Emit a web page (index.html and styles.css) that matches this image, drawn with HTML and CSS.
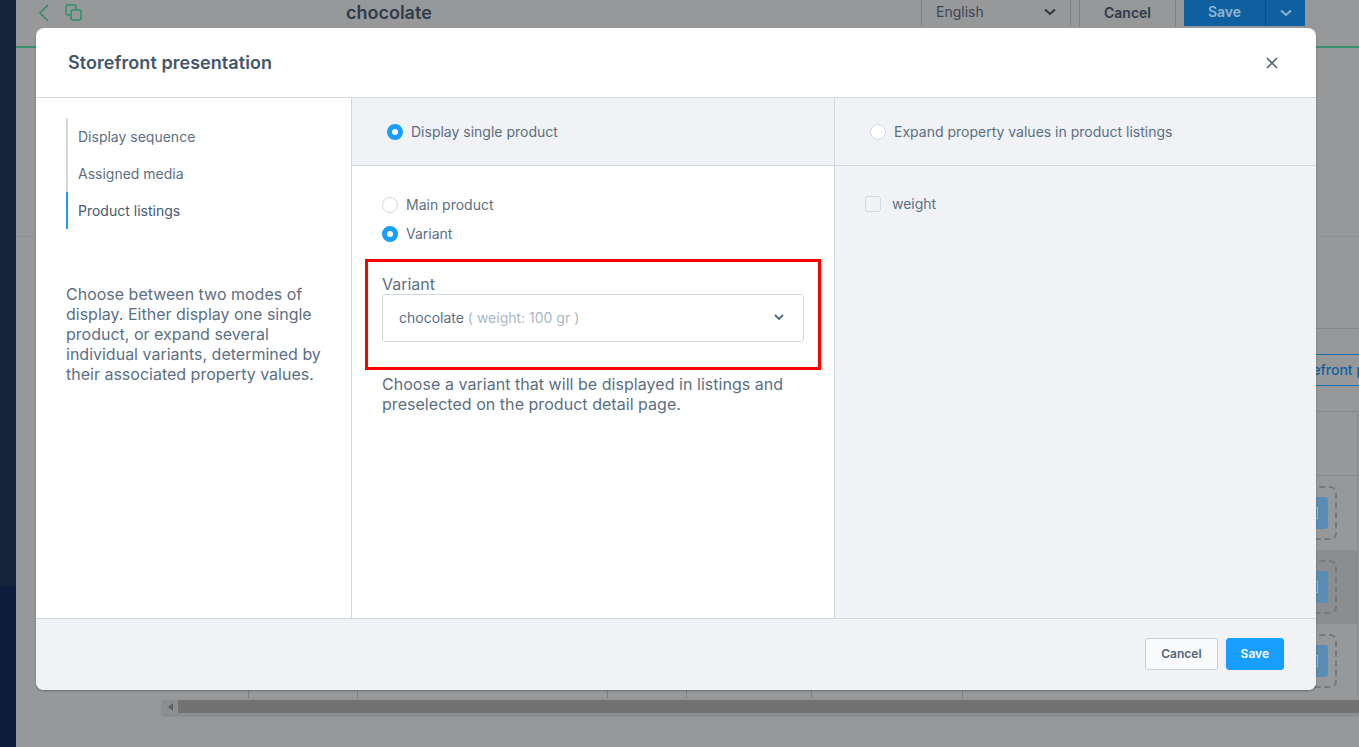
FILE: index.html
```html
<!DOCTYPE html>
<html lang="en">
<head>
  <meta charset="UTF-8" />
  <title>Storefront presentation</title>
  <link rel="stylesheet" href="styles.css">
</head>
<body>
  <div class="page">
    <aside class="rail">
      <div class="rail-bottom"></div>
    </aside>
    <main class="content">
      <header class="topbar">
        <div class="top-icons">
          <svg width="14" height="20" viewBox="0 0 14 20"><path d="M11 2 3 10l8 8" fill="none" stroke="#2f8f6a" stroke-width="1.5"/></svg>
          <svg width="18" height="18" viewBox="0 0 18 18"><g fill="none" stroke="#2f8f6a" stroke-width="1.5"><path d="M5 11H3a2 2 0 0 1-2-2V3a2 2 0 0 1 2-2h6a2 2 0 0 1 2 2v2"/><rect x="6" y="6" width="10" height="10" rx="2"/></g></svg>
        </div>
        <div class="top-title">chocolate</div>
        <div class="top-lang">English
          <svg width="12" height="8" viewBox="0 0 12 8"><path d="M1 1.500 6 6l5-4.500" fill="none" stroke="#2b3440" stroke-width="2"/></svg>
        </div>
        <div class="top-cancel">Cancel</div>
        <div class="top-save">
          <span class="top-save-label">Save</span>
          <span class="top-save-arrow"><svg width="12" height="8" viewBox="0 0 12 8"><path d="M1 1.500 6 6l5-4.500" fill="none" stroke="#8fb4d2" stroke-width="2"/></svg></span>
        </div>
      </header>
      <div class="bg-card"></div>
    </main>
  </div>

  <div class="backdrop-table">
    <div class="bg-tabs">
      <div class="bg-tab">Storefront presentation</div>
    </div>
    <div class="bg-head"></div>
    <div class="bg-row"><span class="drop"><span class="drop-btn"><i></i></span></span></div>
    <div class="bg-row shaded"><span class="drop"><span class="drop-btn"><i></i></span></span></div>
    <div class="bg-row">
      <span class="cell c1"></span>
      <span class="cell c2"></span>
      <span class="cell c3"></span>
      <span class="cell c4"></span>
      <span class="cell c5"></span>
      <span class="cell c6"></span>
      <span class="drop"><span class="drop-btn"><i></i></span></span>
    </div>
    <div class="scrollbar">
      <span class="scroll-arrow"><svg width="5" height="8" viewBox="0 0 5 8"><path d="M5 0v8L0 4z" fill="#5f6062"/></svg></span>
      <span class="scroll-thumb"></span>
    </div>
  </div>

  <section class="modal">
    <header class="modal-header">
      <h1>Storefront presentation</h1>
      <svg width="12" height="12" viewBox="0 0 12 12"><path d="M1 1l10 10M11 1 1 11" fill="none" stroke="#52667a" stroke-width="1.6"/></svg>
    </header>

    <div class="modal-body">
      <div class="modal-side">
        <nav class="side-nav">
          <a href="#">Display sequence</a>
          <a href="#">Assigned media</a>
          <a href="#" class="active">Product listings</a>
        </nav>
        <p class="side-help">Choose between two modes of display. Either display one single product, or expand several individual variants, determined by their associated property values.</p>
      </div>

      <div class="mode mode-single">
        <div class="mode-head">
          <span class="radio checked"></span>
          <span>Display single product</span>
        </div>
        <div class="mode-content">
          <label class="option"><span class="radio"></span>Main product</label>
          <label class="option"><span class="radio checked"></span>Variant</label>
          <div class="highlight">
            <div class="field-label">Variant</div>
            <div class="select">
              <span>chocolate <em>( weight: 100 gr )</em></span>
              <svg width="10" height="7" viewBox="0 0 10 7"><path d="M1 1l4 4 4-4" fill="none" stroke="#52667a" stroke-width="1.8"/></svg>
            </div>
          </div>
          <p class="field-help">Choose a variant that will be displayed in listings and preselected on the product detail page.</p>
        </div>
      </div>

      <div class="mode mode-expand">
        <div class="mode-head">
          <span class="radio"></span>
          <span>Expand property values in product listings</span>
        </div>
        <div class="mode-content">
          <label class="option check-option"><span class="checkbox"></span>weight</label>
        </div>
      </div>
    </div>

    <footer class="modal-footer">
      <button class="btn">Cancel</button>
      <button class="btn primary">Save</button>
    </footer>
  </section>
</body>
</html>
```

FILE: styles.css
```css
* {
  margin: 0;
  padding: 0;
  box-sizing: border-box;
}

html, body {
  height: 100%;
  overflow: hidden;
}

body {
  font-family: Inter, "Noto Sans", sans-serif;
  background: #97989a;
  color: #5b6f83;
  font-size: 14px;
}

.page {
  display: flex;
  height: 100vh;
}

.rail {
  display: flex;
  flex-direction: column;
  justify-content: flex-end;
  width: 16px;
  background: #15233a;
}

.rail-bottom {
  height: 161px;
  background: #0c1e3c;
}

.content {
  flex: 1;
}

.topbar {
  display: flex;
  align-items: stretch;
  height: 48px;
  border-bottom: 2px solid #3a8f6e;
  padding-bottom: 20px;
}

.top-icons {
  display: flex;
  align-items: center;
  gap: 14px;
  width: 330px;
  padding-left: 21px;
}

.top-title {
  width: 575px;
  font-size: 18px;
  font-weight: 600;
  color: #2f3b4a;
  line-height: 26px;
}

.top-lang {
  display: flex;
  align-items: center;
  justify-content: space-between;
  width: 150px;
  padding: 0 14px 3px;
  border-left: 1px solid #7c8288;
  border-right: 1px solid #7c8288;
  color: #3c4651;
}

.top-cancel {
  width: 97px;
  margin-left: 8px;
  border-left: 1px solid #7c8288;
  border-right: 1px solid #7c8288;
  text-align: center;
  line-height: 25px;
  font-weight: 600;
  color: #2f3b4a;
}

.top-save {
  display: flex;
  margin-left: 8px;
  background: #0f60a0;
  color: #8fb4d2;
  font-weight: 600;
}

.top-save-label {
  width: 81px;
  text-align: center;
  line-height: 24px;
}

.top-save-arrow {
  width: 40px;
  display: flex;
  align-items: center;
  justify-content: center;
  border-left: 1px solid #0c4f85;
}

.bg-card {
  height: 189px;
  border-bottom: 1px solid #8f9092;
}

/* table behind the modal, only its right edge and scrollbar show */
.backdrop-table {
  position: absolute;
  left: 162px;
  right: 1px;
  top: 328px;
}

.bg-tabs {
  height: 83px;
  padding-top: 25px;
  border-top: 1px solid #85878a;
  margin-right: -1px;
}

.bg-tab {
  height: 32px;
  margin-left: 1108px;
  padding-left: 15px;
  border-top: 1px solid #1a6bb0;
  border-bottom: 1px solid #1a6bb0;
  color: #0f60a0;
  font-weight: 500;
  line-height: 30px;
  white-space: nowrap;
  overflow: hidden;
}

.bg-head {
  height: 65px;
  border-top: 1px solid #87898b;
  border-bottom: 1px solid #87898b;
  border-right: 1px solid #87898b;
}

.bg-row {
  display: flex;
  justify-content: flex-end;
  align-items: center;
  height: 74px;
  padding-right: 20px;
  border-right: 1px solid #87898b;
}

.bg-row.shaded {
  background: #8b8d90;
}

.cell {
  align-self: stretch;
  border-right: 1px solid #7f8183;
}

.c1 { width: 87px; }
.c2 { width: 109px; }
.c3 { width: 250px; }
.c4 { width: 79px; }
.c5 { width: 125px; }
.c6 { width: 151px; margin-right: auto; }

.drop {
  display: flex;
  align-items: center;
  justify-content: flex-end;
  width: 54px;
  height: 54px;
  padding-right: 7px;
  border: 2px dashed #77797c;
  border-radius: 7px;
}

.drop-btn {
  display: flex;
  align-items: center;
  justify-content: flex-end;
  width: 34px;
  height: 32px;
  padding-right: 10px;
  background: #5a8db5;
  border-radius: 3px;
}

.drop-btn i {
  width: 12px;
  height: 12px;
  border: 1px solid #9db8cd;
}

.scrollbar {
  display: flex;
  height: 15px;
  margin: 2px -1px 0 0;
  background: #8d8e90;
  box-shadow: 0 1px 2px rgba(0,0,0,0.15);
}

.scroll-arrow {
  display: flex;
  align-items: center;
  justify-content: center;
  width: 16px;
  height: 13px;
}

.scroll-thumb {
  flex: 1;
  height: 13px;
  background: #727272;
}

.modal {
  position: absolute;
  left: 36px;
  top: 28px;
  width: 1280px;
  height: 662px;
  display: flex;
  flex-direction: column;
  background: #fff;
  border-radius: 8px;
  overflow: hidden;
  box-shadow: 0 1px 2px rgba(0,0,0,0.3);
}

.modal-header {
  display: flex;
  align-items: center;
  justify-content: space-between;
  height: 70px;
  padding: 0 38px 0 32px;
  border-bottom: 1px solid #d1d9e0;
  flex-shrink: 0;
}

.modal-header h1 {
  font-size: 18px;
  font-weight: 600;
  letter-spacing: 0.05px;
  color: #43566a;
}

.modal-body {
  display: flex;
  flex: 1;
}

.modal-side {
  width: 316px;
  padding: 20px 30px;
  border-right: 1px solid #d1d9e0;
}

.side-nav a {
  display: block;
  height: 37px;
  line-height: 37px;
  padding-left: 10px;
  border-left: 2px solid #d1d9e0;
  color: #5b6f83;
  text-decoration: none;
}

.side-nav a.active {
  border-left-color: #189eff;
  color: #475a6e;
}

.side-help {
  margin-top: 55px;
  line-height: 20px;
  font-size: 16px;
  width: 260px;
}

.mode-single {
  width: 483px;
  border-right: 1px solid #d1d9e0;
}

.mode-expand {
  flex: 1;
  background: #f0f2f5;
}

.mode-head {
  display: flex;
  align-items: center;
  gap: 8px;
  height: 68px;
  background: #f0f2f5;
  border-bottom: 1px solid #d1d9e0;
  padding-left: 35px;
}

.mode-content {
  padding: 24px 30px;
}

.option {
  display: flex;
  align-items: center;
  gap: 8px;
  height: 29px;
}

.radio {
  width: 16px;
  height: 16px;
  border: 1px solid #d1d9e0;
  border-radius: 50%;
  background: #fff;
  flex-shrink: 0;
}

.radio.checked {
  border: 5px solid #189eff;
}

.highlight {
  width: 456px;
  height: 111px;
  margin: 11px 0 0 -17px;
  padding: 12px 14px 0;
  border: 3px solid #f00;
}

.field-label {
  font-size: 16px;
  line-height: 20px;
}

.select {
  display: flex;
  align-items: center;
  justify-content: space-between;
  height: 48px;
  padding: 0 19px 1px 16px;
  border: 1px solid #d1d9e0;
  border-radius: 3px;
}

.select em {
  font-style: normal;
  color: #a9b8c6;
}

.field-help {
  margin-top: 4px;
  font-size: 16px;
  letter-spacing: 0.04px;
  line-height: 20px;
}

.check-option {
  gap: 11px;
  margin-top: -1px;
}

.checkbox {
  width: 16px;
  height: 16px;
  margin-top: 1px;
  border: 1px solid #d1d9e0;
  border-radius: 3px;
  background: #f0f2f5;
}

.modal-footer {
  display: flex;
  align-items: center;
  justify-content: flex-end;
  gap: 8px;
  height: 72px;
  padding: 0 32px 2px;
  background: #f0f2f5;
  border-top: 1px solid #d1d9e0;
  flex-shrink: 0;
}

.btn {
  height: 32px;
  padding: 0 15px;
  font: 600 12px Inter, sans-serif;
  color: #52667a;
  background: #f9fafb;
  border: 1px solid #c8d2dc;
  border-radius: 3px;
}

.btn.primary {
  padding: 0 14px;
  color: #fff;
  background: #189eff;
  border-color: #189eff;
}
```
